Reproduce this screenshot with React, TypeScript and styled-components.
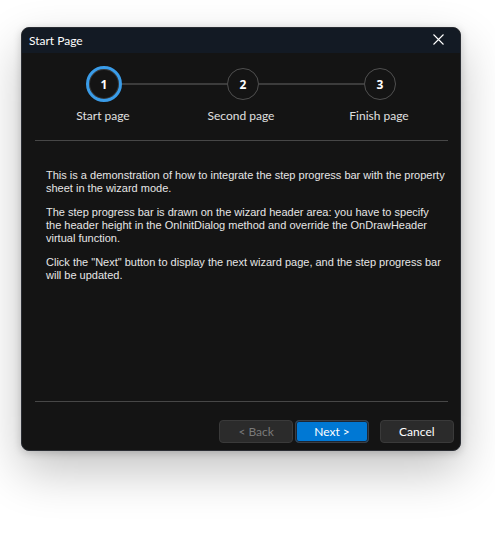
import styled, { createGlobalStyle } from "styled-components";

const Global = createGlobalStyle`
  html, body {
    margin: 0;
    background: #ffffff;
  }
  body {
    font-family: Lato, "Noto Sans", sans-serif;
  }
`;

const Page = styled.div`
  width: 495px;
  height: 538px;
  padding: 27px 0 0 21px;
  box-sizing: border-box;
`;

const Window = styled.div`
  width: 440px;
  height: 424px;
  display: flex;
  flex-direction: column;
  background: #141414;
  border: 1px solid #2a2d33;
  box-sizing: border-box;
  border-radius: 8px;
  overflow: hidden;
  box-shadow: 0 20px 48px rgba(0, 0, 0, 0.24), 0 2px 8px rgba(0, 0, 0, 0.18);
`;

const TitleBar = styled.div`
  height: 25px;
  display: flex;
  align-items: center;
  justify-content: space-between;
  background: #131a24;
  padding: 0 15px 0 7px;
`;

const Title = styled.span`
  color: #ffffff;
  font-size: 12px;
`;

const CloseButton = styled.button`
  border: none;
  background: none;
  padding: 0;
  width: 14px;
  height: 14px;
  margin-top: -2px;
  display: flex;
  align-items: center;
  justify-content: center;
`;

const Header = styled.div`
  display: flex;
  flex-direction: column;
  padding: 13px 13px 0 13px;
`;

const CircleRow = styled.div`
  display: flex;
  align-items: center;
  height: 36px;
  padding: 0 51px;
`;

const Circle = styled.div<{ $active?: boolean }>`
  width: ${(p) => (p.$active ? 36 : 32)}px;
  height: ${(p) => (p.$active ? 36 : 32)}px;
  box-sizing: border-box;
  border-radius: 50%;
  border: ${(p) => (p.$active ? "3px solid #3a9ce8" : "1.5px solid #505050")};
  box-shadow: ${(p) => (p.$active ? "inset 0 0 0 1px #3a3a3a" : "none")};
  display: flex;
  align-items: center;
  justify-content: center;
  color: #ffffff;
  font-family: "Noto Sans", sans-serif;
  font-size: 12px;
  font-weight: 700;
  flex-shrink: 0;
`;

const Connector = styled.div`
  flex: 1;
  height: 2px;
  background: #3c3c3c;
`;

const Labels = styled.div`
  display: grid;
  grid-template-columns: repeat(3, 138px);
  justify-content: center;
  margin-top: 6px;
`;

const Label = styled.span`
  text-align: center;
  color: #e0e0e0;
  font-size: 12px;
  line-height: 16px;
`;

const Spacer = styled.div`
  height: 16px;
`;

const Rule = styled.hr`
  border: none;
  height: 1px;
  background: #474747;
  margin: 0 12px 0 13px;
`;

const Content = styled.div`
  flex: 1;
  padding: 28px 8px 0 24px;
`;

const Paragraph = styled.p`
  margin: 0 0 11px 0;
  color: #e6e6e6;
  font-family: "Liberation Sans", Arial, sans-serif;
  font-size: 11px;
  line-height: 13px;
  white-space: nowrap;
`;

const Line = styled.span`
  display: block;
`;

const Footer = styled.div`
  display: flex;
  align-items: center;
  padding: 18px 6px 7px 197px;
`;

const Button = styled.button<{ $primary?: boolean; $gap?: number }>`
  width: ${(p) => (p.$primary ? 74 : 75)}px;
  height: 23px;
  margin-left: ${(p) => p.$gap ?? 0}px;
  border-radius: 4px;
  border: 1px solid ${(p) => (p.$primary ? "#3b3f45" : "#3a3a3a")};
  background: ${(p) => (p.$primary ? "#0078d4" : "#2b2b2b")};
  box-shadow: ${(p) => (p.$primary ? "inset 0 0 0 1px #1c2634" : "none")};
  color: ${(p) => (p.disabled ? "#7a7a7a" : "#ffffff")};
  font-family: Lato, "Noto Sans", sans-serif;
  font-size: 12px;
  padding: 0;
`;

const paragraphs = [
  [
    "This is a demonstration of how to integrate the step progress bar with the property",
    "sheet in the wizard mode.",
  ],
  [
    "The step progress bar is drawn on the wizard header area: you have to specify",
    "the header height in the OnInitDialog method and override the OnDrawHeader",
    "virtual function.",
  ],
  [
    'Click the "Next" button to display the next wizard page, and the step progress bar',
    "will be updated.",
  ],
];

const App = () => {
  return (
    <>
      <Global />
      <Page>
        <Window>
          <TitleBar>
            <Title>Start Page</Title>
            <CloseButton aria-label="Close">
              <svg width="11" height="11" viewBox="0 0 11 11">
                <path d="M0.5 0.5 L10.5 10.5 M10.5 0.5 L0.5 10.5" stroke="#ffffff" strokeWidth="1.1" />
              </svg>
            </CloseButton>
          </TitleBar>
          <Header>
            <CircleRow>
              <Circle $active>1</Circle>
              <Connector />
              <Circle>2</Circle>
              <Connector />
              <Circle>3</Circle>
            </CircleRow>
            <Labels>
              <Label>Start page</Label>
              <Label>Second page</Label>
              <Label>Finish page</Label>
            </Labels>
          </Header>
          <Spacer />
          <Rule />
          <Content>
            {paragraphs.map((lines) => (
              <Paragraph key={lines[0]}>
                {lines.map((l) => (
                  <Line key={l}>{l}</Line>
                ))}
              </Paragraph>
            ))}
          </Content>
          <Rule />
          <Footer>
            <Button disabled>&lt; Back</Button>
            <Button $primary $gap={2}>Next &gt;</Button>
            <Button $gap={11}>Cancel</Button>
          </Footer>
        </Window>
      </Page>
    </>
  );
};

export default App;
